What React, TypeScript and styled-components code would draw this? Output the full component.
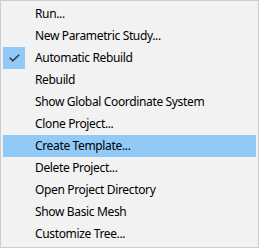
import React from "react";
import styled, { createGlobalStyle } from "styled-components";

const Global = createGlobalStyle`
  html, body { margin: 0; padding: 0; background: #ffffff; }
`;

const Menu = styled.ul`
  box-sizing: border-box;
  width: 259px;
  height: 248px;
  margin: 0;
  padding: 2px;
  list-style: none;
  background: #f2f2f2;
  border: 1px solid #cccccc;
  font-family: "Noto Sans", "Open Sans", sans-serif;
  font-size: 12px;
  letter-spacing: -0.35px;
  color: #000000;
`;

const Item = styled.li<{ $active?: boolean }>`
  display: flex;
  align-items: center;
  height: 22px;
  background: ${(p) => (p.$active ? "#91c9f7" : "transparent")};
`;

const Gutter = styled.span<{ $checked?: boolean }>`
  display: flex;
  align-items: center;
  justify-content: center;
  width: 22px;
  height: 22px;
  margin-right: 10px;
  background: ${(p) => (p.$checked ? "#91c9f7" : "transparent")};
`;

const Label = styled.span`
  white-space: nowrap;
  line-height: 22px;
`;

const Check = () => (
  <svg width="11" height="8" viewBox="0 0 11 8">
    <path d="M0.8 3.8 L3.8 6.8 L10.2 0.8" fill="none" stroke="#333333" strokeWidth="1.5" />
  </svg>
);

const items = [
  "Run...",
  "New Parametric Study...",
  "Automatic Rebuild",
  "Rebuild",
  "Show Global Coordinate System",
  "Clone Project...",
  "Create Template...",
  "Delete Project...",
  "Open Project Directory",
  "Show Basic Mesh",
  "Customize Tree...",
];

export default function App() {
  return (
    <>
      <Global />
      <Menu>
        {items.map((t) => (
          <Item key={t} $active={t === "Create Template..."}>
            <Gutter $checked={t === "Automatic Rebuild"}>
              {t === "Automatic Rebuild" && <Check />}
            </Gutter>
            <Label>{t}</Label>
          </Item>
        ))}
      </Menu>
    </>
  );
}
